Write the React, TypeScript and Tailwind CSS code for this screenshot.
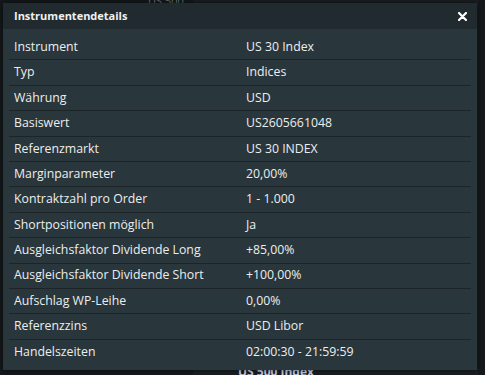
const rows: [string, string][] = [
  ['Instrument', 'US 30 Index'],
  ['Typ', 'Indices'],
  ['Währung', 'USD'],
  ['Basiswert', 'US2605661048'],
  ['Referenzmarkt', 'US 30 INDEX'],
  ['Marginparameter', '20,00%'],
  ['Kontraktzahl pro Order', '1 - 1.000'],
  ['Shortpositionen möglich', 'Ja'],
  ['Ausgleichsfaktor Dividende Long', '+85,00%'],
  ['Ausgleichsfaktor Dividende Short', '+100,00%'],
  ['Aufschlag WP-Leihe', '0,00%'],
  ['Referenzzins', 'USD Libor'],
  ['Handelszeiten', '02:00:30 - 21:59:59'],
]

export default function App() {
  return (
    <div
      className="relative h-[375px] w-[485px] overflow-hidden bg-[#15191b]"
      style={{ fontFamily: '"Open Sans", "Noto Sans", sans-serif' }}
    >
      {/* page behind the dialog */}
      <div className="absolute inset-y-0 left-[193px] w-[285px] bg-[#1a1f22]" />
      <div className="absolute left-[148px] top-[-7px] text-[11px] text-[#6b7478]">US 500</div>
      <div className="absolute bottom-[-6px] left-[238px] text-[12px] font-bold text-[#c9d0e8]">US 500 Index</div>

      {/* dialog */}
      <div className="absolute left-[3px] top-[3px] w-[474px] bg-[#29363b] pb-[5px] shadow-[0_0_6px_rgba(0,0,0,0.6)]">
        <div className="flex h-[26px] items-center justify-between bg-[#212b2f] pl-[11px] pr-[9px]">
          <span className="text-[11px] font-bold text-[#f0f0f0]">Instrumentendetails</span>
          <svg width="9" height="9" viewBox="0 0 9 9" className="mr-[1px]">
            <path d="M1 1L8 8M8 1L1 8" stroke="#ffffff" strokeWidth="2.2" strokeLinecap="round" />
          </svg>
        </div>
        <div className="mx-[6px] mt-[6px]">
          {rows.map(([label, value], i) => (
            <div
              key={label}
              className={`flex h-[25.4px] items-center text-[12.3px] text-[#eceeee] ${
                i < rows.length - 1 ? 'border-b border-[#1c2427]' : ''
              }`}
            >
              <span className="w-[237px] pl-[5px]">{label}</span>
              <span>{value}</span>
            </div>
          ))}
        </div>
      </div>
    </div>
  )
}
